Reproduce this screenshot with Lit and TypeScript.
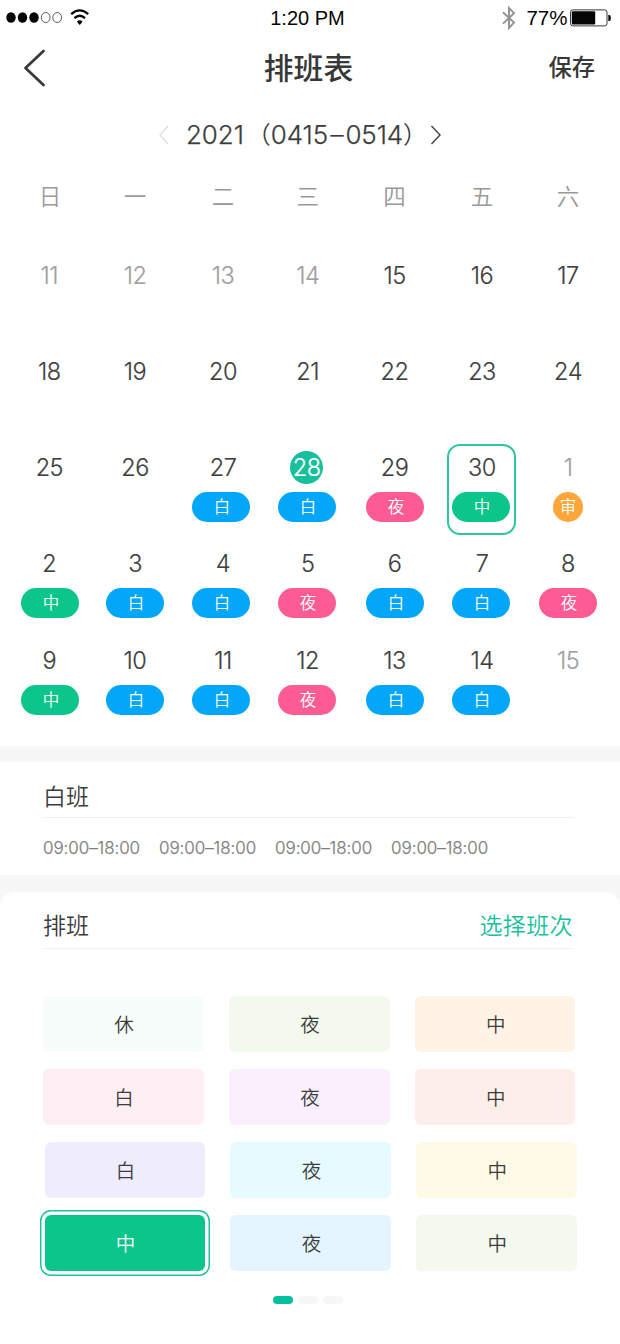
import { LitElement, html, css, svg, nothing } from "lit";
import { customElement, property, state } from "lit/decorators.js";

type Shift = "day" | "mid" | "night" | "audit";

interface DayInfo {
  n: number;
  muted?: boolean;
  today?: boolean;
  shift?: Shift;
}

const LABELS: Record<Shift, string> = { day: "白", mid: "中", night: "夜", audit: "审" };

const WEEKDAYS = ["日", "一", "二", "三", "四", "五", "六"];

const d = (n: number, shift?: Shift, extra: Partial<DayInfo> = {}): DayInfo => ({ n, shift, ...extra });
const off = { muted: true };

const WEEKS: DayInfo[][] = [
  [d(11, undefined, off), d(12, undefined, off), d(13, undefined, off), d(14, undefined, off), d(15), d(16), d(17)],
  [d(18), d(19), d(20), d(21), d(22), d(23), d(24)],
  [d(25), d(26), d(27, "day"), d(28, "day", { today: true }), d(29, "night"), d(30, "mid"), d(1, "audit", off)],
  [d(2, "mid"), d(3, "day"), d(4, "day"), d(5, "night"), d(6, "day"), d(7, "day"), d(8, "night")],
  [d(9, "mid"), d(10, "day"), d(11, "day"), d(12, "night"), d(13, "day"), d(14, "day"), d(15, undefined, off)],
];

const TILES: { label: string; tone: string }[][] = [
  [{ label: "休", tone: "mint" }, { label: "夜", tone: "lime" }, { label: "中", tone: "peach" }],
  [{ label: "白", tone: "rose" }, { label: "夜", tone: "orchid" }, { label: "中", tone: "coral" }],
  [{ label: "白", tone: "violet" }, { label: "夜", tone: "cyan" }, { label: "中", tone: "cream" }],
  [{ label: "中", tone: "green" }, { label: "夜", tone: "sky" }, { label: "中", tone: "leaf" }],
];

@customElement("status-bar")
class StatusBar extends LitElement {
  static styles = css`
    :host {
      display: grid;
      grid-template-columns: 1fr auto 1fr;
      align-items: center;
      height: 36px;
      padding: 0 9px 0 6px;
      box-sizing: border-box;
      font: 20px/36px "Liberation Sans", sans-serif;
      color: #050505;
    }
    .left, .right { display: flex; align-items: center; }
    .right { justify-content: flex-end; }
    .time { padding-right: 2px; }
    .bt { margin-right: 10.500px; }
    .pct { font-size: 20.500px; margin-right: 2.500px; }
    svg { display: block; }
  `;
  render() {
    return html`
      <div class="left">
        <svg width="84" height="18" viewBox="0 0 84 18">
          ${[5, 16.5, 28].map((x) => svg`<ellipse cx=${x} cy="8.5" rx="4.7" ry="5.3" fill="#050505" />`)}
          ${[39.7, 51.2].map((x) => svg`<ellipse cx=${x} cy="8.5" rx="4.4" ry="5" fill="none" stroke="#333" stroke-width="0.8" />`)}
          <path d="M65.2 5.2Q73.7 -2.4 82.2 5.2M68.4 9.1Q73.7 4.4 79 9.1" fill="none" stroke="#050505" stroke-width="2.3" />
          <path d="M71 12.2Q73.7 10.2 76.4 12.2Q76 14 73.7 16Q71.400 14 71 12.2Z" fill="#050505" />
        </svg>
      </div>
      <span class="time">1:20 PM</span>
      <div class="right">
        <svg class="bt" width="14" height="24" viewBox="0 0 14 24">
          <path d="M1 6.200L12 16.600L7 22V2L12 7.200L1 17.600" fill="none" stroke="#929292" stroke-width="1.9" />
        </svg>
        <span class="pct">77%</span>
        <svg width="41" height="18" viewBox="0 0 41 18">
          <rect x="0.500" y="0.900" width="36.500" height="16" rx="2.300" fill="none" stroke="#222" stroke-width="0.900" />
          <rect x="1.800" y="2.200" width="23.400" height="13.200" rx="1" fill="#050505" />
          <path d="M38.300 6H39.300Q40.800 6 40.800 9Q40.800 12 39.300 12H38.300Z" fill="#050505" />
        </svg>
      </div>
    `;
  }
}

@customElement("day-cell")
class DayCell extends LitElement {
  @property({ attribute: false }) day!: DayInfo;
  @property({ type: Boolean, reflect: true }) selected = false;

  static styles = css`
    :host { display: block; position: relative; width: 58px; }
    .num {
      display: flex;
      justify-content: center;
      align-items: center;
      height: 33px;
      margin: 0 calc(var(--nudge, 0px) * -1) 8px var(--nudge, 0px);
      font: 300 23.5px/33px Inter, sans-serif;
      -webkit-text-stroke: 0.2px currentColor;
      letter-spacing: -0.5px;
      color: #3f3f3f;
    }
    .muted { color: #a0a0a0; }
    .disc { width: 33px; height: 33px; margin-left: -2px; border-radius: 50%; background: #17c09b; color: #fff; text-align: center; }
    .pill {
      display: block;
      height: 30px;
      border-radius: 15px;
      font: 350 16.500px/29px "Noto Sans CJK SC", sans-serif;
      text-align: center;
      color: #fff;
      text-indent: 2px;
    }
    .day { background: #02a7f9; }
    .mid { background: #0cc58a; }
    .night { background: #fc5c93; }
    .audit { background: #ffa63b; width: 30px; margin: 0 auto; text-indent: 0; }
    .ring {
      position: absolute;
      left: -5px;
      top: -7px;
      width: 69px;
      height: 91px;
      box-sizing: border-box;
      border: 2px solid #2dc6a3;
      border-radius: 13px;
    }
  `;
  render() {
    const { n, muted, today, shift } = this.day;
    return html`
      ${this.selected ? html`<div class="ring"></div>` : nothing}
      <div class="num ${muted ? "muted" : ""}">
        ${today ? html`<span class="disc">${n}</span>` : n}
      </div>
      ${shift ? html`<span class="pill ${shift}">${LABELS[shift]}</span>` : nothing}
    `;
  }
}

@customElement("app-root")
class AppRoot extends LitElement {
  @state() private selectedDay = "2-5";
  @state() private selectedTile = "3-0";

  static styles = css`
    :host {
      display: flex;
      flex-direction: column;
      width: 620px;
      height: 1344px;
      overflow: hidden;
      background: #fff;
      color: #3c3c3c;
      font-family: "Noto Sans CJK SC", sans-serif;
    }
    svg { display: block; }
    .nav {
      display: grid;
      grid-template-columns: 1fr auto 1fr;
      align-items: center;
      height: 64px;
      padding: 0 25px 0 22px;
    }
    .back { margin-left: 1px; }
    .title { font-size: 29.800px; line-height: 60px; padding-bottom: 4px; font-weight: 500; color: #383838; }
    .save { justify-self: end; font-size: 23.300px; line-height: 60px; padding-bottom: 4px; font-weight: 500; color: #383838; }
    .range { display: flex; align-items: center; height: 70px; padding-left: 159px; }
    .period {
      display: flex;
      width: 244px;
      margin-left: 17px;
      font: 300 26px/40px Inter, "Noto Sans CJK SC", sans-serif;
      -webkit-text-stroke: 0.25px currentColor;
      letter-spacing: -0.100px;
      white-space: nowrap;
    }
    .dash { padding: 0 2px 0 2.500px; }
    .paren { font-family: "Noto Sans CJK SC", sans-serif; font-size: 24px; line-height: 36px; -webkit-text-stroke: 0; font-weight: 350; }
    .open { margin-left: 3px; }
    .weekdays, .week { display: grid; grid-template-columns: 85px 86px 86px 88px 86px 87px 58px; padding-left: 21px; }
    .weekdays { height: 89px; font-size: 22.500px; font-weight: 350; line-height: 50px; color: #999; }
    .weekday { width: 58px; text-align: center; }
    .weekdays > :nth-child(3), .week > :nth-child(3) { --nudge: 2px; }
    .weekdays > :nth-child(4), .week > :nth-child(4) { --nudge: 0.700px; }
    .weekdays > :nth-child(5), .week > :nth-child(5) { --nudge: -0.500px; }
    .weekdays > :nth-child(6), .week > :nth-child(6) { --nudge: 1px; }
    .week > :nth-child(1) { --nudge: -0.700px; }
    .weekday { text-indent: calc(var(--nudge, 0px) * 2); }
    .calendar { height: 487px; }
    .week { height: 96.150px; }
    .band { flex: none; box-sizing: border-box; height: 146px; padding: 16px 0 17px; background: #f7f7f7; }
    .detail { height: 113px; background: #fff; padding: 0 46px 0 43px; }
    .head {
      display: flex;
      justify-content: space-between;
      box-sizing: border-box;
      height: 56px;
      border-bottom: 1px solid #f1f1f1;
      font-size: 23px;
      font-weight: 350;
      line-height: 66px;
    }
    .times {
      display: flex;
      gap: 19px;
      font: 300 17px/60px Inter, sans-serif;
      -webkit-text-stroke: 0.25px currentColor;
      letter-spacing: -0.080px;
      color: #808080;
    }
    .panel { flex: 1; background: #fff; border-radius: 15px 15px 0 0; padding: 0 43px; }
    .wrap { flex: 1; display: flex; background: #f7f7f7; }
    .panel .head { height: 57px; margin-right: 3px; line-height: 64px; }
    .pick { color: #17c09b; letter-spacing: 0.400px; margin-right: 1px; }
    .tiles { padding-top: 47px; }
    .row { display: grid; grid-template-columns: repeat(3, 160.700px); gap: 25.200px; height: 56.200px; margin-bottom: 16.900px; }
    .row:nth-child(n + 3) { margin-left: 1.500px; margin-right: -1.500px; }
    .tile { border-radius: 6px; text-align: center; font-size: 19.500px; font-weight: 350; line-height: 55px; text-indent: 1.500px; }
    .mint { background: #f6fdfb; }
    .lime { background: #f4f9ee; }
    .peach { background: #fff3e5; }
    .rose { background: #ffeef3; }
    .orchid { background: #f9effd; }
    .coral { background: #fdeeea; }
    .violet { background: #efecfd; }
    .cyan { background: #e5fbff; }
    .cream { background: #fffae6; }
    .green { background: #0cc58a; color: #fff; }
    .sky { background: #e4f5ff; }
    .leaf { background: #f4f9ee; }
    .active { box-shadow: 0 0 0 3.500px #fff, 0 0 0 5px #1cc29d; }
    .pager { display: flex; gap: 5px; margin: 24.500px 0 0 230px; }
    .dot { width: 20px; height: 8.500px; border-radius: 5px; background: #f7f7f7; }
    .on { background: #05c19b; }
  `;

  render() {
    return html`
      <status-bar></status-bar>
      <header class="nav">
        <svg class="back" width="24" height="40" viewBox="0 0 24 40">
          <path d="M20.500 3L2.500 20L20.500 37" fill="none" stroke="#3a3a3a" stroke-width="2.800" stroke-linecap="round" stroke-linejoin="round" />
        </svg>
        <span class="title">排班表</span>
        <span class="save">保存</span>
      </header>
      <div class="range">
        <svg width="10" height="20" viewBox="0 0 10 20">
          <path d="M9 1L1 10L9 19" fill="none" stroke="#ddd" stroke-width="1.200" />
        </svg>
        <span class="period"
          ><span>2021</span><span class="paren open">（</span><span>0415</span><span class="dash">–</span><span>0514</span
          ><span class="paren">）</span></span
        >
        <svg width="12" height="20" viewBox="0 0 12 20">
          <path d="M1.500 1L10 10L1.500 19" fill="none" stroke="#444" stroke-width="1.400" />
        </svg>
      </div>
      <div class="weekdays">${WEEKDAYS.map((w) => html`<span class="weekday">${w}</span>`)}</div>
      <div class="calendar">
        ${WEEKS.map(
          (week, r) => html`<div class="week">
            ${week.map(
              (day, c) => html`<day-cell
                .day=${day}
                ?selected=${this.selectedDay === `${r}-${c}`}
                @click=${() => (this.selectedDay = `${r}-${c}`)}
              ></day-cell>`
            )}
          </div>`
        )}
      </div>
      <div class="band">
        <section class="detail">
          <div class="head">白班</div>
          <div class="times">${[0, 1, 2, 3].map(() => html`<span>09:00–18:00</span>`)}</div>
        </section>
      </div>
      <div class="wrap">
        <section class="panel">
          <div class="head"><span>排班</span><span class="pick">选择班次</span></div>
          <div class="tiles">
            ${TILES.map(
              (row, r) => html`<div class="row">
                ${row.map(
                  (t, c) => html`<div
                    class="tile ${t.tone} ${this.selectedTile === `${r}-${c}` ? "active" : ""}"
                    @click=${() => (this.selectedTile = `${r}-${c}`)}
                  >${t.label}</div>`
                )}
              </div>`
            )}
          </div>
          <div class="pager"><span class="dot on"></span><span class="dot"></span><span class="dot"></span></div>
        </section>
      </div>
    `;
  }
}
